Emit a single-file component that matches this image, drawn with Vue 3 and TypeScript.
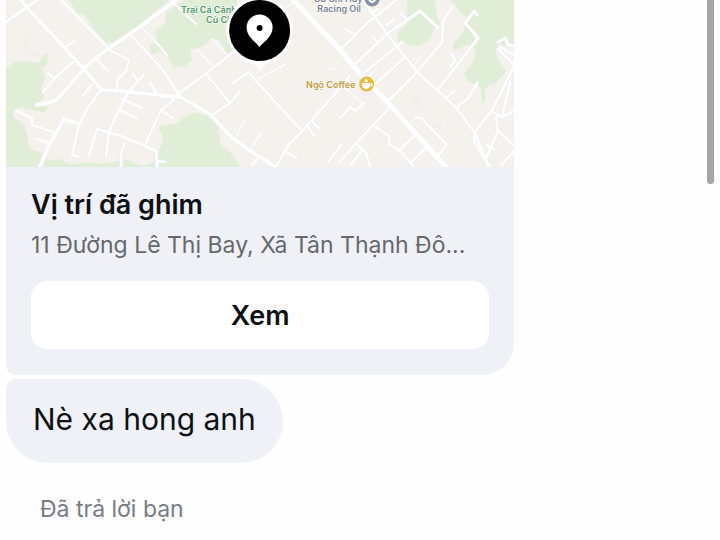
<script setup lang="ts">
interface Road {
  d: string
  w: number
}

const parks: string[] = [
  'M69 0L77 13L85 16L94 29L106 43L119 41L138 27L147 18L170 0Z',
  'M166 12L184 0H237V44L229 55L225 50L218 39L210 40L204 46L190 50L192 60L187 65L174 68L163 50L151 55L150 46L157 39L155 31L165 23Z',
  'M6 68L15 62L26 61L39 63L43 55L48 54L47 64L42 69L45 77L41 89L44 98L34 106L48 107L45 113L20 107L14 111L13 117L24 125L28 138L29 149L40 152L49 160L59 159L71 165L86 162L101 164L115 162L124 159L142 166L152 163L158 155L163 138L159 128L162 125L176 124L186 116L195 112L211 117L222 120L218 129L221 145L231 153L240 167H6Z',
  'M407 0H434L437 16L440 23L433 29L430 40L418 46L397 42L398 32L407 24Z',
  'M450 0H514V43L505 46L498 44L495 52L501 65L506 71L496 83L485 88V100L482 105L480 87L467 81L464 74L473 62L476 50L466 45L453 51L453 43L463 32L466 18L455 6Z',
]

const roads: Road[] = [
  { d: 'M21 0L26 7L51 33L82 67L102 90L120 91L180 97', w: 4 },
  { d: 'M6 22L37 0', w: 3 },
  { d: 'M61 0L108 48', w: 3 },
  { d: 'M176 0L144 24L108 49L86 66L68 87L55 101L37 105', w: 4 },
  { d: 'M131 35L162 69L180 96', w: 3 },
  { d: 'M142 28L154 40L168 56', w: 2 },
  { d: 'M172 98L204 75L232 53', w: 3 },
  { d: 'M161 96L180 97L210 114L232 138L250 151L276 167', w: 4 },
  { d: 'M63 48L75 41M73 62L55 78L43 92M48 73L55 79', w: 3 },
  { d: 'M97 60L108 71M108 49L129 60L126 71L117 80V91', w: 3 },
  { d: 'M133 74L138 81L144 75M138 81L129 91L118 112L109 132L106 157', w: 3 },
  { d: 'M150 83L156 93M122 99L142 108M119 110L137 118', w: 3 },
  { d: 'M92 84L83 96M101 90L88 107L79 125L72 155L78 157', w: 3 },
  { d: 'M16 111L32 118L32 125L53 132M37 139L48 143', w: 3 },
  { d: 'M40 167L48 147L64 119L79 124', w: 4 },
  { d: 'M89 155L97 129L121 136L143 145L156 151L157 167', w: 3 },
  { d: 'M174 100L161 110L145 145M161 110L172 118M124 143L121 154V167M158 161L165 162', w: 3 },
  { d: 'M165 74L174 88L180 94M197 50L212 65M212 39L226 54', w: 2 },
  { d: 'M206 74L230 103L211 116M231 102L239 92', w: 3 },
  { d: 'M233 83L248 72L266 92L300 129', w: 3 },
  { d: 'M258 79L286 64M245 120L236 137M262 131L251 149', w: 2 },
  { d: 'M276 167L288 145L304 129L338 90L350 76M307 126L314 136M312 121L319 128M286 152L296 158M251 166L258 158', w: 3 },
  { d: 'M293 0L308 16L339 49L361 75L390 105L414 132L446 167', w: 6 },
  { d: 'M286 8L297 0M272 10L282 20M170 0L196 24', w: 2 },
  { d: 'M340 50L367 23L396 0M345 29L352 33', w: 3 },
  { d: 'M363 0L390 38L418 73L438 91L456 108L475 133L488 167', w: 3 },
  { d: 'M354 65L388 33L420 11L438 28', w: 3 },
  { d: 'M372 36L378 43M386 25L394 19M400 13L406 19M371 13L378 9', w: 3 },
  { d: 'M364 73L402 42M374 85L405 57M389 100L416 73L442 42L443 21L452 7', w: 3 },
  { d: 'M414 65L420 58M367 78L377 68M337 70L330 68M340 84L362 103', w: 2 },
  { d: 'M437 90L457 65L478 38L465 23L474 11L477 15', w: 3 },
  { d: 'M450 67L455 60L452 54M446 98L454 91M456 108L468 98L477 83', w: 3 },
  { d: 'M388 109L356 143L340 162M374 126L389 136L389 144L401 152L414 167', w: 3 },
  { d: 'M356 143L366 153L370 167M350 165L362 151M398 151L415 135M410 163L426 148', w: 3 },
  { d: 'M340 118L350 107L355 111L364 103M328 162L341 145', w: 3 },
  { d: 'M415 118L420 117L447 145L438 155', w: 3 },
  { d: 'M514 66L492 110L474 133V142L490 167M491 111L501 117L514 111M502 116L510 82', w: 3 },
  { d: 'M498 49L514 65M498 42L505 38L508 45L514 46M501 47L507 52M514 55L500 47', w: 3 },
  { d: 'M496 117L497 130L514 146M497 133L485 160M487 145L493 149M501 165L514 151', w: 3 },
]

const trails: string[] = [
  'M29 37L25 45L30 52L38 55',
  'M412 95L418 110L422 108L416 97',
  'M431 118L443 129M433 126L440 128',
  'M487 80L496 88M505 83L499 98',
]
</script>

<template>
  <main class="screen">
    <section class="thread">
      <article class="card">
        <svg class="map" viewBox="6 0 508 167" preserveAspectRatio="xMidYMid slice" role="img">
          <rect x="6" y="0" width="508" height="167" fill="#f5f2ee" />
          <path v-for="park in parks" :key="park" :d="park" fill="#e0eed8" />
          <g fill="none" stroke-linecap="round" stroke-linejoin="round">
            <path v-for="trail in trails" :key="trail" :d="trail" stroke="#eaeaed" stroke-width="1" />
            <path v-for="road in roads" :key="'e' + road.d" :d="road.d" stroke="#efedef" :stroke-width="road.w + 1" />
            <path v-for="road in roads" :key="road.d" :d="road.d" stroke="#ffffff" :stroke-width="road.w - 0.5" />
          </g>
          <g class="place">
            <text x="181" y="13" fill="#4e9470">Trại Cá Cảnh</text>
            <text x="206" y="23" fill="#4e9470">Củ Chi</text>
            <text x="338" y="2" text-anchor="middle" fill="#788495">Củ Chi Huy</text>
            <text x="339" y="12" text-anchor="middle" fill="#788495">Racing Oil</text>
            <text x="306" y="88" fill="#c59a3a">Ngộ Coffee</text>
          </g>
          <circle cx="372" cy="-1" r="7.5" fill="#8794a5" />
          <path d="M369 0Q372 4 375 0" fill="none" stroke="#fff" stroke-width="2" />
          <circle cx="366.500" cy="84" r="7.500" fill="#e8bd3c" />
          <path d="M362 83H370V86Q369 89 366 89Q363 89 362 86ZM364 82L366 78L368 82Z" fill="#fff" />
          <path d="M370 84H372V86H369" fill="none" stroke="#fff" stroke-width="1" />
          <path d="M251 60L260 71L269 60Z" fill="#fff" />
          <circle cx="259.500" cy="30.500" r="33.500" fill="#fff" />
          <circle cx="259.500" cy="30.500" r="30.500" fill="#000" />
          <path d="M259.500 47C256 42 246.500 37 246.500 27.500A13 13 0 0 1 272.500 27.500C272.500 37 263 42 259.500 47Z" fill="#fff" />
          <circle cx="259.500" cy="28" r="3" fill="#000" />
        </svg>
        <div class="details">
          <h2 class="title">Vị trí đã ghim</h2>
          <p class="address">11 Đường Lê Thị Bay, Xã Tân Thạnh Đô...</p>
          <button class="view" type="button">Xem</button>
        </div>
      </article>
      <p class="bubble">Nè xa hong anh</p>
      <p class="reply">Đã trả lời bạn</p>
    </section>
    <div class="scroll-thumb"></div>
  </main>
</template>

<style>
body {
  background: #fefefe;
}
</style>

<style scoped>
.screen {
  display: flex;
  align-items: flex-start;
  padding: 0 6px;
  font-family: Inter, "Noto Sans", sans-serif;
  color: #0d1014;
}

.thread {
  flex: 1;
  min-width: 0;
  display: flex;
  flex-direction: column;
  align-items: flex-start;
  gap: 4px;
}

.card {
  width: 72.5%;
  overflow: hidden;
  border-radius: 0 0 32px 10px;
  background: #f0f1f6;
}

.map {
  display: block;
  width: 100%;
  height: 167px;
}

.place {
  font-size: 9px;
  font-weight: 600;
  stroke: #fff;
  stroke-width: 1px;
  stroke-linejoin: round;
  paint-order: stroke;
}

.details {
  display: flex;
  flex-direction: column;
  padding: 20px 25px 26px;
}

.title {
  margin: 0;
  font-size: 27px;
  font-weight: 600;
  line-height: 36px;
}

.address {
  margin: 4px 0 18px;
  overflow: hidden;
  font-size: 23px;
  line-height: 36px;
  white-space: nowrap;
  color: #65686c;
}

.view {
  height: 68px;
  border: 0;
  border-radius: 16px;
  background: #fff;
  font-family: inherit;
  font-size: 27px;
  font-weight: 600;
  color: inherit;
}

.bubble {
  margin: 0;
  padding: 20px 27px 24px;
  border-radius: 10px 42px 42px 42px;
  background: #f0f1f6;
  font-size: 30px;
  line-height: 40px;
}

.reply {
  margin: 24px 0 0;
  padding: 0 34px;
  font-size: 23px;
  line-height: 36px;
  color: #777c84;
}

.scroll-thumb {
  width: 7px;
  height: 184px;
  border-radius: 0 0 4px 4px;
  background: #a6a6a6;
}
</style>
